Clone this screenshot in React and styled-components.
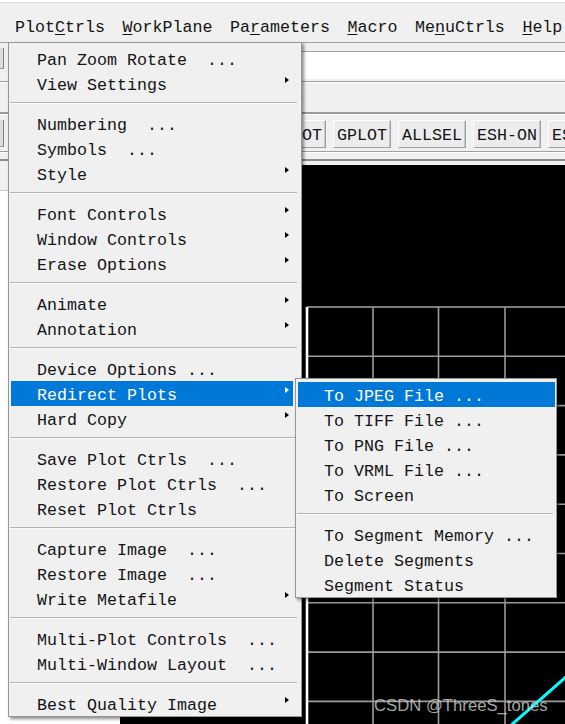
import React from 'react'
import styled, { createGlobalStyle } from 'styled-components'

const GlobalStyle = createGlobalStyle`
  html, body {
    margin: 0;
    padding: 0;
    background: #f0f0f0;
  }
  body {
    font-family: "Liberation Mono", "DejaVu Sans Mono", monospace;
    -webkit-font-smoothing: antialiased;
  }
`

const menuBar = [
  ['Plot', 'C', 'trls'],
  ['', 'W', 'orkPlane'],
  ['Pa', 'r', 'ameters'],
  ['', 'M', 'acro'],
  ['Me', 'n', 'uCtrls'],
  ['', 'H', 'elp'],
]

const plotCtrls = [
  [{ label: 'Pan Zoom Rotate  ...' }, { label: 'View Settings', sub: true }],
  [{ label: 'Numbering  ...' }, { label: 'Symbols  ...' }, { label: 'Style', sub: true }],
  [
    { label: 'Font Controls', sub: true },
    { label: 'Window Controls', sub: true },
    { label: 'Erase Options', sub: true },
  ],
  [{ label: 'Animate', sub: true }, { label: 'Annotation', sub: true }],
  [
    { label: 'Device Options ...' },
    { label: 'Redirect Plots', sub: true, active: true },
    { label: 'Hard Copy', sub: true },
  ],
  [{ label: 'Save Plot Ctrls  ...' }, { label: 'Restore Plot Ctrls  ...' }, { label: 'Reset Plot Ctrls' }],
  [{ label: 'Capture Image  ...' }, { label: 'Restore Image  ...' }, { label: 'Write Metafile', sub: true }],
  [{ label: 'Multi-Plot Controls  ...' }, { label: 'Multi-Window Layout  ...' }],
  [{ label: 'Best Quality Image', sub: true }],
]

const redirectPlots = [
  [
    { label: 'To JPEG File ...', active: true },
    { label: 'To TIFF File ...' },
    { label: 'To PNG File ...' },
    { label: 'To VRML File ...' },
    { label: 'To Screen' },
  ],
  [{ label: 'To Segment Memory ...' }, { label: 'Delete Segments' }, { label: 'Segment Status' }],
]

// buttons further left sit under the open menu; only these show
const toolButtons = ['EPLOT', 'GPLOT', 'ALLSEL', 'ESH-ON', 'ESH-OFF']

// plot grid, in page pixels (the svg viewBox is offset to match)
const gridX = [373, 438.5, 505]
const gridY = [356.3, 405.6, 454.9, 504.2, 553.5, 602.8, 652.1, 701.4]

function MenuList({ groups, left, top, width, inset }) {
    return (
        <Dropdown $left={left} $top={top} $width={width}>
            {groups.map((group, g) => (
                <React.Fragment key={g}>
                    {g > 0 && <Divider $inset={inset} />}
                    {group.map(item => (
                        <Item key={item.label} $active={item.active} $inset={inset}>
                            <Label>{item.label}</Label>
                            {item.sub && <Arrow $active={item.active} />}
                        </Item>
                    ))}
                </React.Fragment>
            ))}
        </Dropdown>
    )
}

function App() {
    return (
        <Screen>
            <GlobalStyle />
            <TopEdge />
            <MenuBar>
                {menuBar.map(([a, hot, b]) => (
                    <BarItem key={a + hot + b}>
                        {a}<Hot>{hot}</Hot>{b}
                    </BarItem>
                ))}
            </MenuBar>
            <InputRow>
                <Stub />
                <Field />
            </InputRow>
            <BlankRow />
            <ButtonRow>
                <Stub />
                {toolButtons.map(name => (
                    <ToolButton key={name}>{name}</ToolButton>
                ))}
            </ButtonRow>
            <Band />
            <Workspace>
                <SidePanel>
                    <SideHead />
                </SidePanel>
                <Graphics>
                    <svg width="445" height="559" viewBox="120 165 445 559">
                        <line x1="307" y1="307" x2="565" y2="307" stroke="#a4a4a4" strokeWidth="1.6" />
                        {gridX.map(x => (
                            <line key={x} x1={x} y1="307" x2={x} y2="724" stroke="#9c9c9c" strokeWidth="1.6" />
                        ))}
                        {gridY.map(y => (
                            <line key={y} x1="307" y1={y} x2="565" y2={y} stroke="#9c9c9c" strokeWidth="1.6" />
                        ))}
                        <line x1="307" y1="307" x2="307" y2="724" stroke="#ffffff" strokeWidth="2.6" />
                        <path d="M509 727 L567 676" stroke="#00ffff" strokeWidth="3" fill="none" />
                    </svg>
                    <Watermark>CSDN @ThreeS_tones</Watermark>
                </Graphics>
            </Workspace>

            <MenuList groups={plotCtrls} left={8} top={42} width={294} inset={8} />
            <MenuList groups={redirectPlots} left={295} top={378} width={262} inset={1} />
        </Screen>
    )
}

export default App

const Screen = styled.div`
    position: relative;
    width: 565px;
    height: 724px;
    overflow: hidden;
    display: flex;
    flex-direction: column;
    background: #f0f0f0;
    font-family: "Liberation Mono", "DejaVu Sans Mono", monospace;
    font-size: 16.66px;
    color: #141414;
`

const TopEdge = styled.div`
    height: 2px;
    background: #ffffff;
    border-bottom: 1px solid #dadada;
    flex: none;
`

const MenuBar = styled.div`
    height: 39px;
    flex: none;
    display: flex;
    padding-left: 6.25px;
    background: #f0f0f0;
`

const BarItem = styled.div`
    padding: 14px 8.75px 0;
    line-height: 22px;
    white-space: pre;
`

const Hot = styled.span`
    text-decoration: underline;
    text-underline-offset: 2px;
    text-decoration-thickness: 1px;
`

const InputRow = styled.div`
    flex: none;
    display: flex;
    align-items: flex-start;
    gap: 8px;
    height: 31px;
    padding: 5px 0 2px;
    border-top: 1px solid #a0a0a0;
    border-bottom: 1px solid #a0a0a0;
`

const Stub = styled.div`
    flex: none;
    width: 3px;
    height: 20px;
    background: #dcdcdc;
    border-right: 1px solid #7c7c7c;
    border-bottom: 1px solid #9a9a9a;
`

const Field = styled.div`
    flex: 1;
    height: 27px;
    margin-top: 3px;
    background: #ffffff;
    border-top: 1px solid #a0a0a0;
    border-left: 1px solid #a0a0a0;
`

const BlankRow = styled.div`
    flex: none;
    height: 29px;
    border-top: 1px solid #ffffff;
    border-bottom: 2px solid #9a9a9a;
`

const ButtonRow = styled.div`
    flex: none;
    display: flex;
    gap: 7px;
    padding: 5px 0 3px;
    border-top: 1px solid #ffffff;
    border-bottom: 1px solid #a0a0a0;
    overflow: hidden;

    & > div:first-child {
        height: 26px;
        margin-right: 257px;
    }
`

const ToolButton = styled.div`
    flex: none;
    box-sizing: border-box;
    height: 28px;
    padding: 3px 3px 0;
    line-height: 23px;
    background: #ececec;
    border: 1px solid;
    border-color: #ffffff #a0a0a0 #a0a0a0 #ffffff;
    box-shadow: inset -1px 0 #c8c8c8;
    white-space: pre;
`

const Band = styled.div`
    flex: none;
    height: 6px;
    margin-bottom: 4px;
    border-top: 1px solid #ffffff;
    border-bottom: 2px solid #8c8c8c;
`

const Workspace = styled.div`
    flex: 1;
    min-height: 0;
    display: flex;
`

const SidePanel = styled.div`
    width: 120px;
    flex: none;
    background: #ffffff;
`

const SideHead = styled.div`
    height: 25px;
    background: #f0f0f0;
    border-bottom: 1px solid #c8c8c8;
`

const Graphics = styled.div`
    position: relative;
    flex: 1;
    background: #000000;
    overflow: hidden;

    svg {
        display: block;
    }
`

const Watermark = styled.div`
    position: absolute;
    left: 254px;
    top: 531px;
    font-family: "Liberation Sans", Arial, sans-serif;
    font-size: 16.7px;
    line-height: 20px;
    color: rgba(205, 205, 205, 0.82);
    white-space: nowrap;
`

const Dropdown = styled.div`
    position: absolute;
    left: ${p => p.$left}px;
    top: ${p => p.$top}px;
    width: ${p => p.$width}px;
    box-sizing: border-box;
    padding: 3px 0 0;
    background: #f0f0f0;
    border: 1px solid #979797;
    box-shadow: 2px 2px 3px rgba(0, 0, 0, 0.45);
`

const Item = styled.div`
    display: flex;
    align-items: flex-start;
    justify-content: space-between;
    box-sizing: border-box;
    height: 25px;
    margin: 0 ${p => p.$inset}px 0 2px;
    padding: 0 4px 0 26px;
    white-space: pre;
    background: ${p => (p.$active ? '#0078d7' : 'transparent')};
    color: ${p => (p.$active ? '#ffffff' : '#141414')};
`

const Label = styled.span`
    padding-top: 4px;
    line-height: 21px;
`

const Arrow = styled.span`
    margin-top: 5.5px;
    width: 0;
    height: 0;
    border-top: 3.5px solid transparent;
    border-bottom: 3.5px solid transparent;
    border-left: 4px solid ${p => (p.$active ? '#ffffff' : '#000000')};
`

const Divider = styled.div`
    height: 1px;
    margin: 6px ${p => (p.$inset > 2 ? 4 : 3)}px 7px 1px;
    background: #b4b4b4;
    border-bottom: 1px solid #fbfbfb;
`
